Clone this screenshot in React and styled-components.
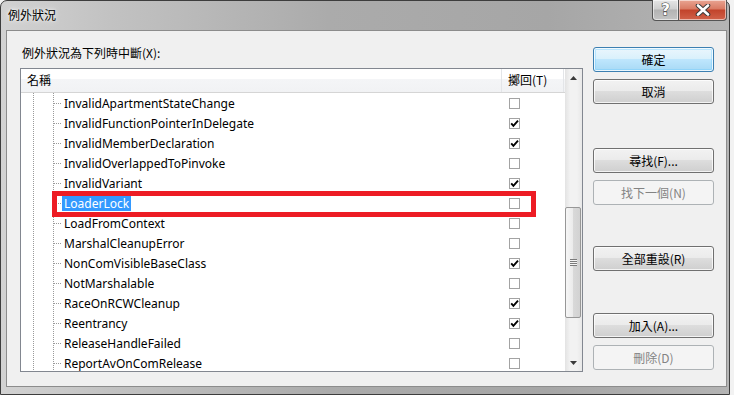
import React from "react";
import styled, { createGlobalStyle, css } from "styled-components";

const items = [
  { name: "InvalidApartmentStateChange", checked: false },
  { name: "InvalidFunctionPointerInDelegate", checked: true },
  { name: "InvalidMemberDeclaration", checked: true },
  { name: "InvalidOverlappedToPinvoke", checked: false },
  { name: "InvalidVariant", checked: true },
  { name: "LoaderLock", checked: false, selected: true },
  { name: "LoadFromContext", checked: false },
  { name: "MarshalCleanupError", checked: false },
  { name: "NonComVisibleBaseClass", checked: true },
  { name: "NotMarshalable", checked: false },
  { name: "RaceOnRCWCleanup", checked: true },
  { name: "Reentrancy", checked: true },
  { name: "ReleaseHandleFailed", checked: false },
  { name: "ReportAvOnComRelease", checked: false },
];

const buttons = [
  { label: "確定", primary: true, top: 16 },
  { label: "取消", top: 7 },
  { label: "尋找(F)...", top: 44 },
  { label: "找下一個(N)", disabled: true, top: 7 },
  { label: "全部重設(R)", top: 41 },
  { label: "加入(A)...", top: 42 },
  { label: "刪除(D)", disabled: true, top: 7 },
];

export default function App() {
  return (
    <>
      <GlobalStyle />
      <Window>
        <TitleBar>
          <Title>例外狀況</Title>
          <Caption>
            <CaptionButton>?</CaptionButton>
            <CaptionButton $close>
              <svg width="16" height="12" viewBox="0 0 16 12">
                <path
                  d="M3 1.5 L13 10.5 M13 1.5 L3 10.5"
                  stroke="#3a3a3a"
                  strokeWidth="4.6"
                  strokeLinecap="round"
                />
                <path
                  d="M3 1.5 L13 10.5 M13 1.5 L3 10.5"
                  stroke="#ffffff"
                  strokeWidth="2.6"
                  strokeLinecap="round"
                />
              </svg>
            </CaptionButton>
          </Caption>
        </TitleBar>

        <Client>
          <LeftColumn>
            <Label>例外狀況為下列時中斷(X):</Label>
            <ListBox>
              <ListContent>
                <Header>
                  <HeaderCell $w={481}>名稱</HeaderCell>
                  <HeaderCell $w={62}>擲回(T)</HeaderCell>
                </Header>
                <Rows>
                  {items.map((it) => (
                    <Row key={it.name}>
                      <NameCell>
                        <Stub />
                        <ItemText $selected={it.selected}>{it.name}</ItemText>
                      </NameCell>
                      <CheckCell>
                        <CheckBox>
                          {it.checked && (
                            <svg width="9" height="9" viewBox="0 0 9 9">
                              <polyline
                                points="1.2,4.3 3.4,6.8 8,1.6"
                                fill="none"
                                stroke="#000"
                                strokeWidth="1.9"
                              />
                            </svg>
                          )}
                        </CheckBox>
                      </CheckCell>
                      {it.selected && <Highlight />}
                    </Row>
                  ))}
                </Rows>
              </ListContent>
              <ScrollBar>
                <ArrowButton>
                  <svg width="7" height="4" viewBox="0 0 7 4">
                    <path d="M0 4 L3.5 0 L7 4 Z" fill="#3b3b3b" />
                  </svg>
                </ArrowButton>
                <Track>
                  <Thumb>
                    <Grip />
                  </Thumb>
                </Track>
                <ArrowButton>
                  <svg width="7" height="4" viewBox="0 0 7 4">
                    <path d="M0 0 L3.5 4 L7 0 Z" fill="#3b3b3b" />
                  </svg>
                </ArrowButton>
              </ScrollBar>
            </ListBox>
          </LeftColumn>

          <ButtonColumn>
            {buttons.map((b) => (
              <Button
                key={b.label}
                $primary={b.primary}
                $disabled={b.disabled}
                $top={b.top}
              >
                {b.label}
              </Button>
            ))}
          </ButtonColumn>
        </Client>
      </Window>
    </>
  );
}

const GlobalStyle = createGlobalStyle`
  html, body {
    margin: 0;
    padding: 0;
    background: #f2f2f2;
  }
  * {
    box-sizing: border-box;
  }
`;

const uiFont = `"Noto Sans", "Noto Sans CJK TC", sans-serif`;

const Window = styled.div`
  width: 730px;
  height: 395px;
  display: flex;
  flex-direction: column;
  border: 1px solid #3d3d3d;
  border-radius: 7px 7px 0 0;
  padding: 0 2px 7px 5px;
  background: linear-gradient(90deg, #d2d2d2 0%, #c2c2c2 15%, #ababab 45%, #a6a6a6 75%, #b4b4b4 100%);
  font-family: ${uiFont};
  font-size: 12px;
  color: #000;
`;

const TitleBar = styled.div`
  height: 29px;
  display: flex;
  justify-content: space-between;
  align-items: flex-start;
  padding-left: 2px;
`;

const Title = styled.div`
  font-family: "Noto Sans CJK TC", sans-serif;
  font-size: 12px;
  line-height: 16px;
  margin-top: 6px;
  text-shadow: 0 0 6px rgba(255, 255, 255, 0.9), 0 0 3px rgba(255, 255, 255, 0.8);
`;

const Caption = styled.div`
  display: flex;
  margin-top: -1px;
`;

const CaptionButton = styled.div`
  width: 27px;
  height: 21px;
  display: flex;
  align-items: center;
  justify-content: center;
  border: 1px solid #555;
  border-top: none;
  border-radius: 0 0 0 4px;
  background: linear-gradient(180deg, #e6e6e6 0%, #cfcfcf 45%, #b3b3b3 50%, #c4c4c4 100%);
  box-shadow: inset 0 0 0 1px rgba(255, 255, 255, 0.55);
  color: #fff;
  font-family: "DejaVu Sans", sans-serif;
  font-weight: bold;
  font-size: 15px;
  -webkit-text-stroke: 1px #3a3a3a;
  paint-order: stroke fill;

  ${(p) =>
    p.$close &&
    css`
      width: 48px;
      border-left: none;
      border-radius: 0 0 4px 0;
      background: linear-gradient(180deg, #e9a593 0%, #d97a63 45%, #c2432b 50%, #d1624a 100%);
    `}
`;

const Client = styled.div`
  flex: 1;
  display: flex;
  border: 1px solid #8c8c8c;
  background: #f0f0f0;
`;

const LeftColumn = styled.div`
  display: flex;
  flex-direction: column;
  padding: 14px 0 0 13px;
`;

const Label = styled.div`
  font-family: "Noto Sans CJK TC", sans-serif;
  line-height: 16px;
  height: 16px;
  margin: 0 0 7px 2px;
`;

const ListBox = styled.div`
  width: 563px;
  height: 304px;
  display: flex;
  border: 1px solid #828790;
  background: #fff;
`;

const ListContent = styled.div`
  width: 544px;
  display: flex;
  flex-direction: column;
`;

const Header = styled.div`
  height: 24px;
  display: flex;
  border-bottom: 1px solid #d5d5d5;
  background: linear-gradient(180deg, #ffffff 0%, #ffffff 42%, #f4f5f7 43%, #f1f2f4 100%);
`;

const HeaderCell = styled.div`
  width: ${(p) => p.$w}px;
  border-right: 1px solid #e3e5e8;
  padding-left: ${(p) => (p.$w > 100 ? 6 : 6)}px;
  font-family: "Noto Sans CJK TC", sans-serif;
  line-height: 22px;
`;

const Rows = styled.div`
  flex: 1;
  overflow: hidden;
  position: relative;
  background-image: repeating-linear-gradient(180deg, #9a9a9a 0 1px, transparent 1px 2px),
    repeating-linear-gradient(180deg, #9a9a9a 0 1px, transparent 1px 2px);
  background-size: 1px 100%, 1px 100%;
  background-position: 12px 0, 32px 0;
  background-repeat: no-repeat;
`;

const Row = styled.div`
  height: 20px;
  display: flex;
  align-items: center;
  position: relative;
`;

const NameCell = styled.div`
  width: 481px;
  display: flex;
  align-items: center;
  padding-left: 33px;
`;

const Stub = styled.div`
  width: 7px;
  height: 1px;
  background: repeating-linear-gradient(90deg, #9a9a9a 0 1px, transparent 1px 2px);
`;

const ItemText = styled.span`
  font-family: ${uiFont};
  font-size: 12px;
  line-height: 15px;
  padding: 0 2px;
  margin-left: 1px;
  ${(p) =>
    p.$selected &&
    css`
      background: #3399ff;
      color: #fff;
    `}
`;

const CheckCell = styled.div`
  width: 63px;
  padding-left: 7px;
  display: flex;
  align-items: center;
`;

const CheckBox = styled.div`
  width: 11px;
  height: 11px;
  border: 1px solid #a3a3a3;
  background: #fff;
  display: flex;
  align-items: center;
  justify-content: center;
`;

const Highlight = styled.div`
  position: absolute;
  left: 31px;
  top: -2px;
  width: 484px;
  height: 26px;
  border: 5px solid #ed1c24;
  pointer-events: none;
  z-index: 2;
`;

const ScrollBar = styled.div`
  width: 17px;
  display: flex;
  flex-direction: column;
  background: linear-gradient(90deg, #e3e3e3 0%, #f2f2f2 30%, #f2f2f2 70%, #e8e8e8 100%);
`;

const ArrowButton = styled.div`
  height: 17px;
  display: flex;
  align-items: center;
  justify-content: center;
`;

const Track = styled.div`
  flex: 1;
  padding-top: 121px;
  display: flex;
  flex-direction: column;
`;

const Thumb = styled.div`
  height: 111px;
  margin: 0 1px 0 0;
  border: 1px solid #979797;
  border-radius: 2px;
  background: linear-gradient(90deg, #f6f6f6 0%, #ebebeb 50%, #d9d9d9 51%, #d2d2d2 100%);
  display: flex;
  align-items: center;
  justify-content: center;
`;

const Grip = styled.div`
  width: 7px;
  height: 7px;
  background: repeating-linear-gradient(180deg, #7b7b7b 0 1px, #f4f4f4 1px 2px);
`;

const ButtonColumn = styled.div`
  display: flex;
  flex-direction: column;
  padding-left: 10px;
`;

const Button = styled.div`
  width: 121px;
  height: 25px;
  margin-top: ${(p) => p.$top}px;
  display: flex;
  align-items: center;
  justify-content: center;
  font-family: "Noto Sans CJK TC", sans-serif;
  font-size: 12px;
  border: 1px solid #707070;
  border-radius: 3px;
  box-shadow: inset 0 0 0 1px rgba(255, 255, 255, 0.75);
  background: linear-gradient(180deg, #f2f2f2 0%, #ebebeb 48%, #dddddd 50%, #cfcfcf 100%);

  ${(p) =>
    p.$primary &&
    css`
      border-color: #3c7fb1;
      box-shadow: inset 0 0 0 1px rgba(255, 255, 255, 0.8), inset 0 0 0 2px rgba(100, 200, 255, 0.35);
      background: linear-gradient(180deg, #eaf6fd 0%, #d9f0fc 48%, #bee6fd 50%, #a7d9f5 100%);
    `}

  ${(p) =>
    p.$disabled &&
    css`
      border-color: #adb2b5;
      box-shadow: none;
      background: #f4f4f4;
      color: #838383;
    `}
`;
